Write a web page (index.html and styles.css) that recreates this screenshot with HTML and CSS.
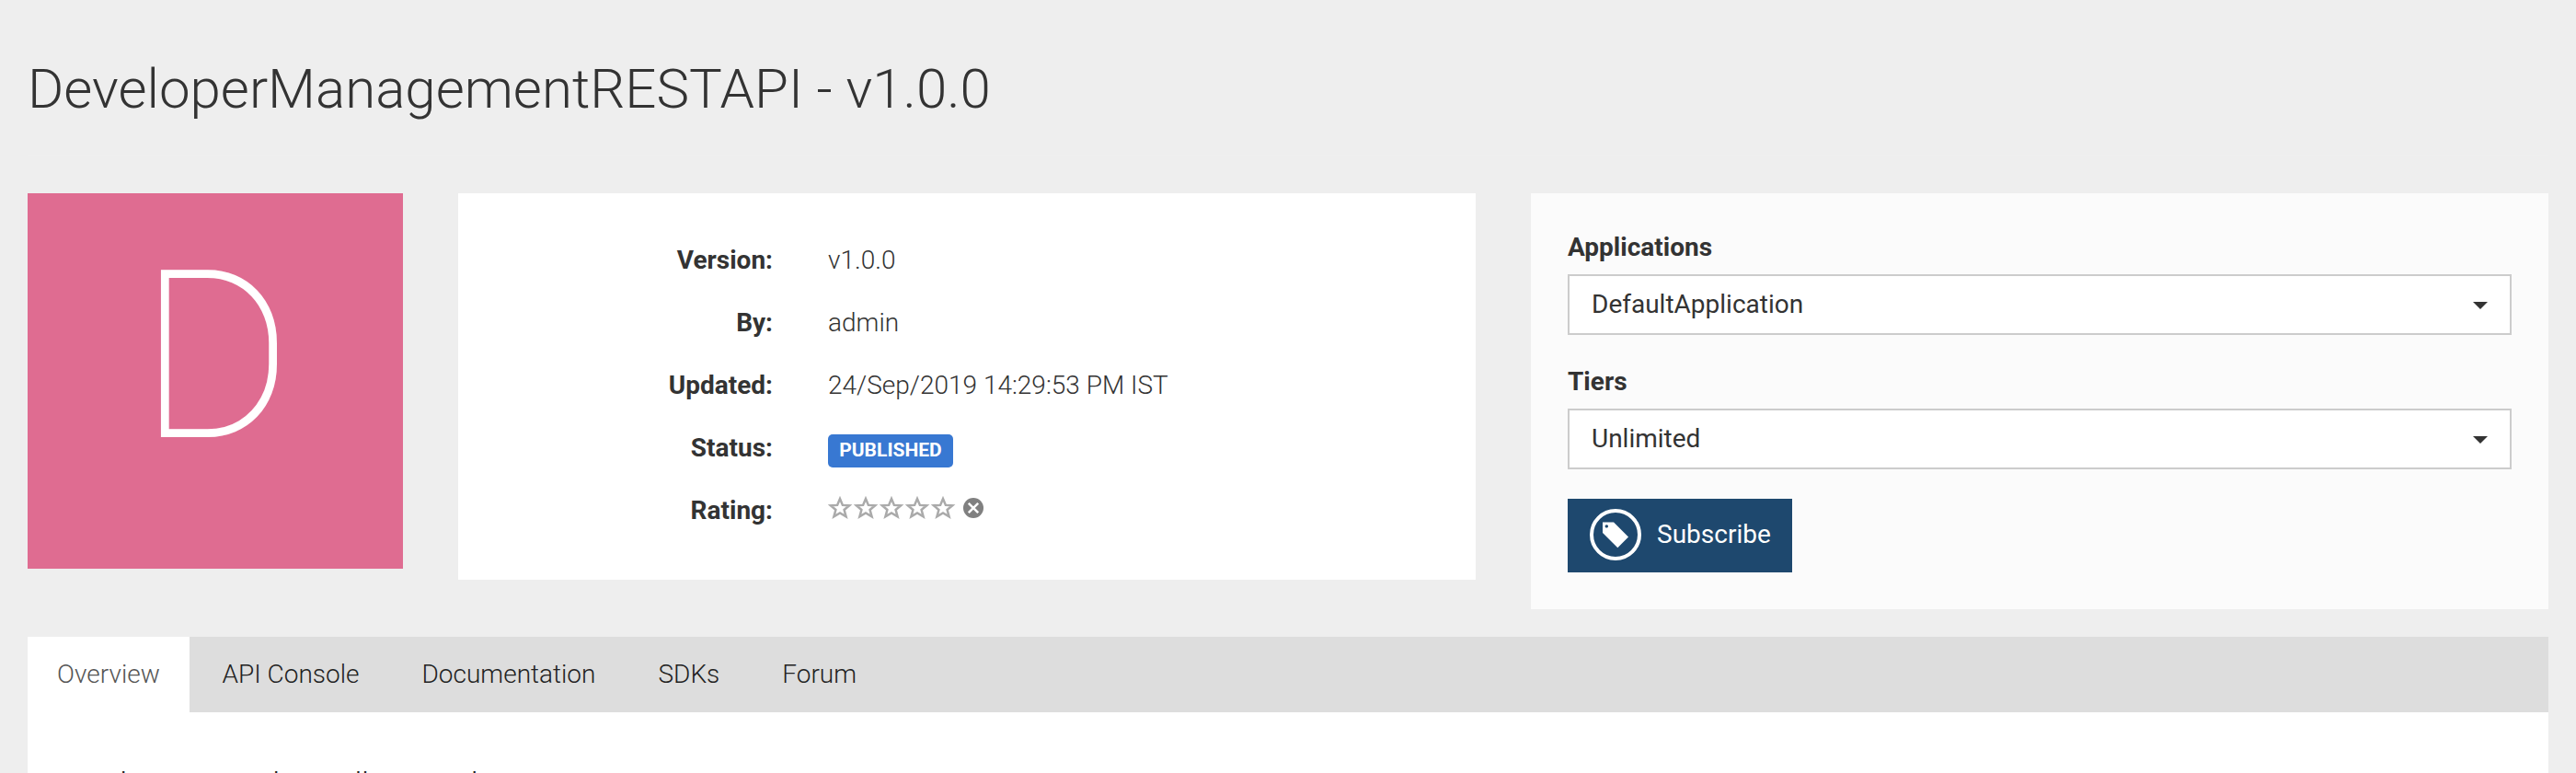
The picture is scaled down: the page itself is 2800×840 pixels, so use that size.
FILE: index.html
```html
<!DOCTYPE html>
<html lang="en">
<head>
<meta charset="utf-8">
<title>DeveloperManagementRESTAPI - v1.0.0</title>
<link rel="stylesheet" href="styles.css">
</head>
<body>
<svg class="defs" width="0" height="0" aria-hidden="true">
  <symbol id="star" viewBox="0 0 28 26"><path d="M13 3 15.9 9.9 23.2 10.3 17.6 15 19.6 22.4 13 18.4 6.4 22.4 8.4 15 2.8 10.3 10.1 9.9Z" fill="none" stroke="#aaa" stroke-width="2.5"/></symbol>
</svg>
<header class="page-head"><h1 class="title">DeveloperManagementRESTAPI - v1.0.0</h1></header>
<hr class="rule">
<main class="page">
  <section class="summary">
    <div class="thumb"><span class="letter">D</span></div>
    <dl class="details">
      <dt>Version:</dt><dd>v1.0.0</dd>
      <dt>By:</dt><dd>admin</dd>
      <dt>Updated:</dt><dd>24/Sep/2019 14:29:53 PM IST</dd>
      <dt>Status:</dt><dd><span class="badge">PUBLISHED</span></dd>
      <dt>Rating:</dt>
      <dd class="rating">
        <svg class="star"><use href="#star"/></svg><svg class="star"><use href="#star"/></svg><svg class="star"><use href="#star"/></svg><svg class="star"><use href="#star"/></svg><svg class="star"><use href="#star"/></svg>
        <svg class="clear" viewBox="0 0 22 22"><circle cx="11" cy="11" r="11" fill="#808080"/><path d="M5.8 5.8 16.2 16.2M16.2 5.8 5.8 16.2" stroke="#fff" stroke-width="2.5"/></svg>
      </dd>
    </dl>
    <form class="subscribe">
      <label class="label">Applications</label>
      <div class="select"><span>DefaultApplication</span><i class="caret"></i></div>
      <label class="label">Tiers</label>
      <div class="select"><span>Unlimited</span><i class="caret"></i></div>
      <button class="btn" type="button">
        <svg class="btn-icon" viewBox="0 0 56 56"><circle cx="28" cy="28" r="26" fill="none" stroke="#fff" stroke-width="4"/><path fill="#fff" fill-rule="evenodd" d="M14 14.5H26L42 30.5 30.3 42.2 14 26ZM18.3 17.2a1.7 1.7 0 1 0 .01 0Z"/></svg>
        <span>Subscribe</span>
      </button>
    </form>
  </section>
  <nav class="tabs">
    <a class="tab active">Overview</a><a class="tab">API Console</a><a class="tab">Documentation</a><a class="tab">SDKs</a><a class="tab">Forum</a>
  </nav>
  <section class="content"><h2 class="subhead">Production and Sandbox Endpoints</h2></section>
</main>
</body>
</html>
```

FILE: styles.css
```css
* { box-sizing: border-box; }
body { margin: 0; height: 840px; overflow: hidden; background: #eee; color: #333; font: 300 28px/40px Roboto, sans-serif; }
.defs { display: block; height: 0; }
.page-head { height: 168px; padding: 61px 30px 0; }
.title { margin: 0; font-size: 60px; line-height: 72px; font-weight: 300; white-space: nowrap; }
.rule { height: 2px; margin: 0 30px; border: 0; background: #efefef; }
.page { padding: 40px 30px 0; }
.summary { display: grid; grid-template-columns: 408px 1106px 1106px; gap: 60px; align-items: start; height: 482px; }
.thumb { height: 408px; background: #df6c91; color: #fff; text-align: center; }
.letter { display: block; font-size: 253px; line-height: 356px; font-weight: 100; -webkit-text-stroke: 2px #fff; }
.details { margin: 0; height: 420px; padding: 42px 0 0; background: #fff; display: grid; grid-template-columns: 342px 1fr; column-gap: 60px; grid-auto-rows: 68px; line-height: 62px; align-content: start; }
.details dt { text-align: right; font-weight: 700; }
.details dd { margin: 0; }
.badge { display: block; width: 136px; height: 36px; margin-top: 16px; border-radius: 5px; background: #3878d2; color: #fff; font-size: 21px; line-height: 34px; font-weight: 700; text-align: center; }
.rating { display: flex; align-items: flex-start; padding-top: 15px; }
.star { width: 28px; height: 26px; }
.clear { width: 22px; height: 22px; margin: 2px 0 0 7px; }
.subscribe { height: 452px; background: #fbfbfb; padding: 39px 40px 0; }
.label { display: block; font-weight: 700; height: 49px; }
.select { display: flex; justify-content: space-between; height: 66px; margin-bottom: 31px; padding: 11px 24px 0; border: 2px solid #ccc; background: #fff; font-weight: 400; }
.caret { margin-top: 17px; width: 16px; height: 8px; background: #333; clip-path: polygon(0 0, 100% 0, 50% 100%); }
.btn { display: flex; align-items: center; gap: 17px; width: 244px; height: 80px; margin: 32px 0 0; padding: 0 24px 2px; border: 0; background: #1e486e; color: #fff; font: 400 28px/40px Roboto, sans-serif; }
.btn-icon { width: 56px; height: 56px; flex: none; }
.tabs { display: flex; height: 82px; background: #ddd; color: #222; }
.tab { padding: 21px 32.5px 0 35.5px; }
.active { width: 176px; padding-left: 32px; background: #fff; color: #555; }
.content { height: 66px; background: #fff; overflow: hidden; padding: 60px 34px 0; }
.subhead { margin: 0; font-size: 36px; line-height: 40px; font-weight: 300; color: #222; white-space: nowrap; }
```
